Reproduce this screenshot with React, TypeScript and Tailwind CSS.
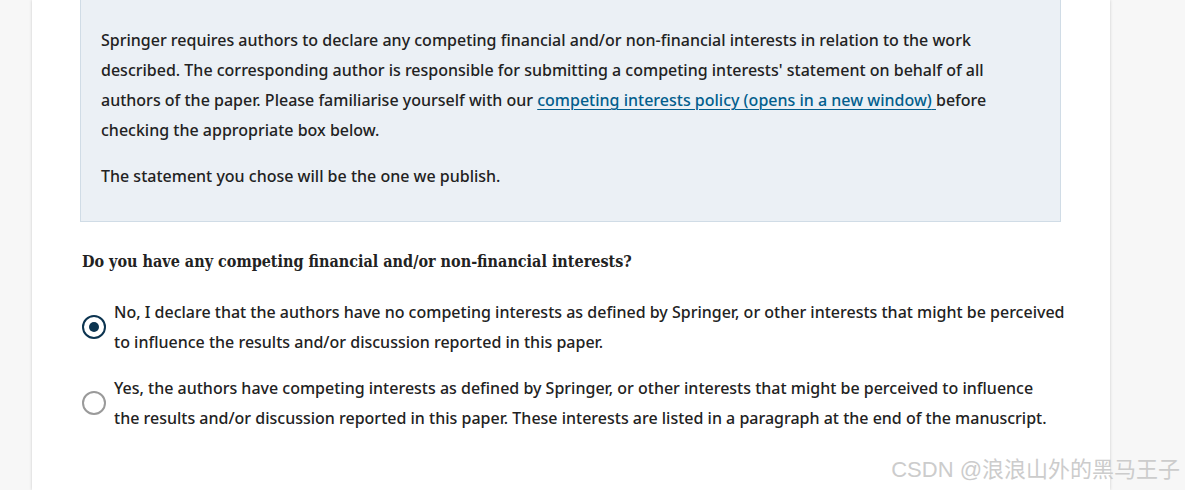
import React from "react";

const body = { fontFamily: "'Noto Sans', Lato, sans-serif" } as React.CSSProperties;
const serif = { fontFamily: "'DejaVu Serif Condensed', 'DejaVu Serif', serif" } as React.CSSProperties;

function Radio({ checked }: { checked: boolean }) {
  return checked ? (
    <span className="flex h-[24px] w-[24px] shrink-0 items-center justify-center rounded-full border-[2.5px] border-[#0c3450] bg-white">
      <span className="block h-[10px] w-[10px] rounded-full bg-[#0c3450]" />
    </span>
  ) : (
    <span className="block h-[24px] w-[24px] shrink-0 rounded-full border-2 border-[#9a9a9a] bg-white" />
  );
}

export default function App() {
  return (
    <div className="relative h-[490px] w-[1185px] overflow-hidden bg-[#f7f7f7]">
      <div className="ml-[32px] h-full w-[1078px] bg-white pl-[48px] shadow-[0_0_3px_rgba(0,0,0,0.18)]">
        <div
          className="w-[981px] border-x border-b border-[#d0dce6] bg-[#ebf0f5] pb-[30px] pl-[20px] pt-[25px] text-[16px] font-medium leading-[30px] text-[#222222]"
          style={body}
        >
          <p className="whitespace-nowrap">
            Springer requires authors to declare any competing financial and/or non-financial interests in relation to the work
            <br />
            described. The corresponding author is responsible for submitting a competing interests' statement on behalf of all
            <br />
            authors of the paper. Please familiarise yourself with our{" "}
            <a href="#" className="text-[#025e8d] underline decoration-1 underline-offset-[3px]">
              competing interests policy (opens in a new window){" "}
            </a>
            before
            <br />
            checking the appropriate box below.
          </p>
          <p className="mt-[16px] whitespace-nowrap">The statement you chose will be the one we publish.</p>
        </div>

        <h2 className="mt-[27px] pl-[2px] text-[16px] font-bold leading-[26px] text-[#222222]" style={serif}>
          Do you have any competing financial and/or non-financial interests?
        </h2>

        <div className="mt-[22px] flex flex-col gap-[16px] pl-[2px] text-[16px] font-medium leading-[30px] text-[#222222]" style={body}>
          <label className="flex items-start gap-[8px]">
            <span className="block shrink-0 pt-[18px]"><Radio checked /></span>
            <span className="whitespace-nowrap">
              No, I declare that the authors have no competing interests as defined by Springer, or other interests that might be perceived
              <br />
              to influence the results and/or discussion reported in this paper.
            </span>
          </label>
          <label className="flex items-start gap-[8px]">
            <span className="block shrink-0 pt-[18px]"><Radio checked={false} /></span>
            <span className="whitespace-nowrap">
              Yes, the authors have competing interests as defined by Springer, or other interests that might be perceived to influence
              <br />
              the results and/or discussion reported in this paper. These interests are listed in a paragraph at the end of the manuscript.
            </span>
          </label>
        </div>
      </div>

      <div
        className="absolute bottom-[5px] right-[5px] text-[22px] leading-[30px] text-[#cccccc]"
        style={{ fontFamily: "'Liberation Sans', 'Noto Sans CJK SC', sans-serif" }}
      >
        CSDN @浪浪山外的黑马王子
      </div>
    </div>
  );
}
